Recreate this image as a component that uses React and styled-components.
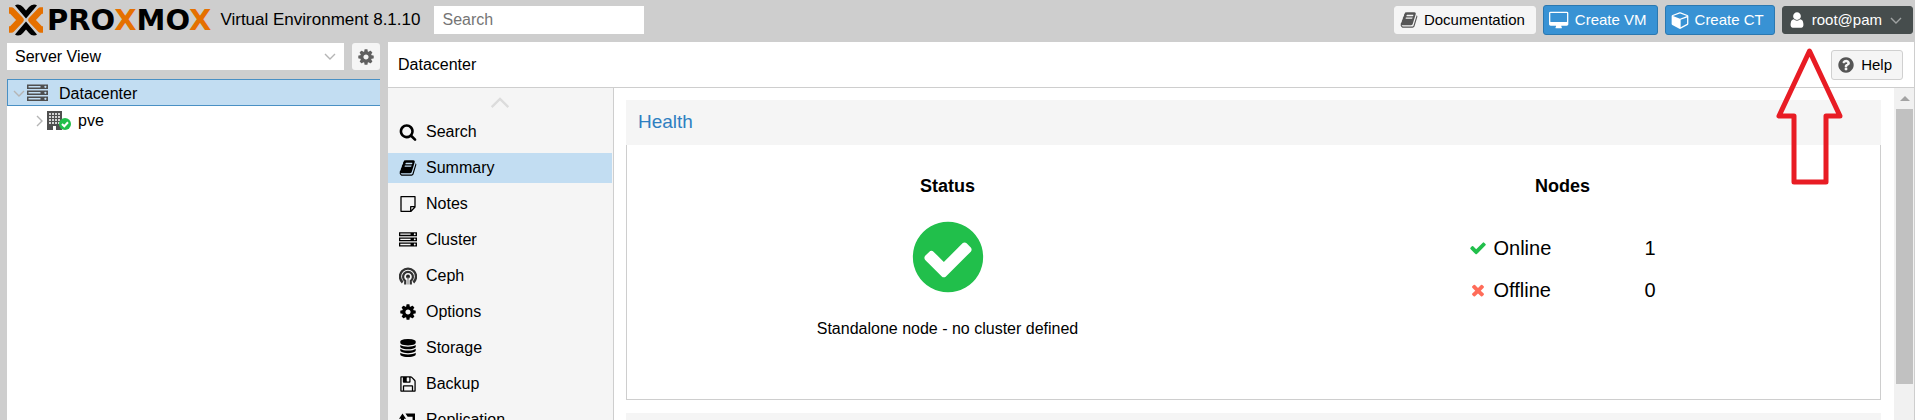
import React from "react";
import styled, { createGlobalStyle, css } from "styled-components";

const GlobalStyle = createGlobalStyle`
  * { box-sizing: border-box; }
  body {
    margin: 0;
    overflow: hidden;
    background: #cecece;
    color: #000;
    font: 16px/20px "Liberation Sans", Arial, sans-serif;
  }
  button, input, select { font: inherit; color: inherit; margin: 0; }
`;

/* ---------- icons ---------- */

const CIRCLE =
  "M1664 896q0 209-103 385.5t-279.5 279.5-385.5 103-385.5-103-279.5-279.5-103-385.5 103-385.5 279.5-279.5 385.5-103 385.5 103 279.500 279.500 103 385.500z";

const PATHS = {
  cog: "M1152 896q0-106-75-181t-181-75-181 75-75 181 75 181 181 75 181-75 75-181zm512-109v222q0 12-8 23t-20 13l-185 28q-19 54-39 91 35 50 107 138 10 12 10 25t-9 23q-27 37-99 108t-94 71q-12 0-26-9l-138-108q-44 23-91 38-16 136-29 186-7 28-36 28h-222q-14 0-24.5-8.5t-11.5-21.5l-28-184q-49-16-90-37l-141 107q-10 9-25 9-14 0-25-11-126-114-165-168-7-10-7-23 0-12 8-23 15-21 51-66.500t54-70.500q-27-50-41-99l-183-27q-13-2-21-12.500t-8-23.500v-222q0-12 8-23t19-13l186-28q14-46 39-92-40-57-107-138-10-12-10-24 0-10 9-23 26-36 98.500-107.500t94.500-71.500q13 0 26 10l138 107q44-23 91-38 16-136 29-186 7-28 36-28h222q14 0 24.500 8.500t11.500 21.500l28 184q49 16 90 37l142-107q9-9 24-9 13 0 25 10 129 119 165 170 7 8 7 22 0 12-8 23-15 21-51 66.500t-54 70.500q26 50 41 98l183 28q13 2 21 12.500t8 23.500z",
  checkCircle:
    "M1412 734q0-28-18-46l-91-90q-19-19-45-19t-45 19l-408 407-226-226q-19-19-45-19t-45 19l-91 90q-18 18-18 46 0 27 18 45l362 362q19 19 45 19 27 0 46-19l543-543q18-18 18-45z" + CIRCLE,
  check:
    "M1671 566q0 40-28 68l-724 724-136 136q-28 28-68 28t-68-28l-136-136-362-362q-28-28-28-68t28-68l136-136q28-28 68-28t68 28l294 295 656-657q28-28 68-28t68 28l136 136q28 28 28 68z",
  times:
    "M1490 1322q0 40-28 68l-136 136q-28 28-68 28t-68-28l-294-294-294 294q-28 28-68 28t-68-28l-136-136q-28-28-28-68t28-68l294-294-294-294q-28-28-28-68t28-68l136-136q28-28 68-28t68 28l294 294 294-294q28-28 68-28t68 28l136 136q28 28 28 68t-28 68l-294 294 294 294q28 28 28 68z",
  search:
    "M1216 832q0-185-131.500-316.500t-316.500-131.500-316.500 131.500-131.500 316.500 131.500 316.500 316.500 131.500 316.500-131.500 131.500-316.500zm512 832q0 52-38 90t-90 38q-54 0-90-38l-343-342q-179 124-399 124-143 0-273.500-55.500t-225-150-150-225-55.500-273.500 55.500-273.500 150-225 225-150 273.500-55.500 273.500 55.500 225 150 150 225 55.500 273.500q0 220-124 399l343 343q37 37 37 90z",
  help:
    "M1024 1376v-192q0-14-9-23t-23-9h-192q-14 0-23 9t-9 23v192q0 14 9 23t23 9h192q14 0 23-9t9-23zm256-672q0-88-55.500-163t-138.500-116-170-41q-243 0-371 213-15 24 8 42l132 100q7 6 19 6 16 0 25-12 53-68 86-92 34-24 86-24 48 0 85.500 26t37.500 59q0 38-20 61t-68 45q-63 28-115.500 86.500t-52.500 125.500v36q0 14 9 23t23 9h192q14 0 23-9t9-23q0-19 21.500-49.500t54.500-49.500q32-18 49-28.500t46-35 44.500-48 28-60.500 12.500-81z" + CIRCLE,
  book: "M1703 478q40 57 18 129l-275 906q-19 64-76.500 107.500t-122.500 43.500h-923q-77 0-148.500-53.500t-99.500-131.500q-24-67-2-127 0-4 3-27t4-37q1-8-3-21.500t-3-19.500q2-11 8-21t16.500-23.500 16.500-23.500q23-38 45-91.500t30-91.500q3-10 .5-30t-.5-28q3-11 17-28t17-23q21-36 42-92t25-90q1-9-2.500-32t.5-28q4-13 22-30.500t22-22.500q19-26 42.500-84.500t27.500-96.500q1-8-3-25.500t-2-26.500q2-8 9-18t18-23 17-21q8-12 16.500-30.500t15-35 16-36 19.500-32 26.500-23.500 36-11.500 47.500 5.500l-1 3q38-9 51-9h761q74 0 114 56t18 130l-274 906q-36 119-71.500 153.500t-128.500 34.500h-869q-27 0-38 15-11 16-1 43 24 70 144 70h923q29 0 56-15.500t35-41.500l300-987q7-22 5-57 38 15 59 43zm-1064 2q-4 13 2 22.500t20 9.500h608q13 0 25.500-9.500t16.500-22.500l21-64q4-13-2-22.500t-20-9.500h-608q-13 0-25.500 9.500t-16.500 22.500zm-83 256q-4 13 2 22.500t20 9.500h608q13 0 25.500-9.500t16.500-22.500l21-64q4-13-2-22.500t-20-9.500h-608q-13 0-25.500 9.500t-16.500 22.500z",
  user: "M1536 1399q0 109-62.500 187t-150.500 78h-854q-88 0-150.500-78t-62.500-187q0-85 8.500-160.500t31.500-152 58.500-131 94-89 134.500-34.500q131 128 313 128t313-128q76 0 134.500 34.500t94 89 58.500 131 31.500 152 8.500 160.500zm-256-887q0 159-112.500 271.500t-271.500 112.500-271.500-112.500-112.500-271.500 112.500-271.500 271.500-112.500 271.500 112.500 112.500 271.500z",
  desktop:
    "M1728 992v-832q0-13-9.500-22.500t-22.500-9.500h-1600q-13 0-22.500 9.500t-9.500 22.500v832q0 13 9.500 22.500t22.500 9.500h1600q13 0 22.500-9.500t9.500-22.500zm128-832v1088q0 66-47 113t-113 47h-544q0 37 16 77.500t32 71 16 43.500q0 26-19 45t-45 19h-512q-26 0-45-19t-19-45q0-14 16-44t32-70 16-78h-544q-66 0-113-47t-47-113v-1088q0-66 47-113t113-47h1600q66 0 113 47t47 113z",
  cube: "M896 1629l640-349v-636l-640 233v752zm-64-865l698-254-698-254-698 254zm832-252v768q0 35-18 65t-49 47l-704 384q-28 16-61 16t-61-16l-704-384q-31-17-49-47t-18-65v-768q0-40 23-73t61-47l704-256q22-8 44-8t44 8l704 256q38 14 61 47t23 73z",
  database:
    "M896 768q237 0 443-43t325-127v170q0 69-103 128t-280 93.500-385 34.500-385-34.500-280-93.500-103-128v-170q119 84 325 127t443 43zm0 768q237 0 443-43t325-127v170q0 69-103 128t-280 93.500-385 34.500-385-34.500-280-93.500-103-128v-170q119 84 325 127t443 43zm0-384q237 0 443-43t325-127v170q0 69-103 128t-280 93.500-385 34.500-385-34.500-280-93.500-103-128v-170q119 84 325 127t443 43zm0-1152q208 0 385 34.500t280 93.500 103 128v128q0 69-103 128t-280 93.500-385 34.500-385-34.500-280-93.500-103-128v-128q0-69 103-128t280-93.500 385-34.500z",
  floppy:
    "M512 1536h768v-384h-768v384zm896 0h128v-896q0-14-10-38.500t-20-34.500l-281-281q-10-10-34-20t-39-10v416q0 40-28 68t-68 28h-576q-40 0-68-28t-28-68v-416h-128v1280h128v-416q0-40 28-68t68-28h832q40 0 68 28t28 68v416zm-384-928v-320q0-13-9.500-22.500t-22.500-9.500h-192q-13 0-22.500 9.500t-9.500 22.500v320q0 13 9.500 22.500t22.500 9.500h192q13 0 22.500-9.500t9.500-22.500zm640 32v928q0 40-28 68t-68 28h-1344q-40 0-68-28t-28-68v-1344q0-40 28-68t68-28h928q40 0 88 20t76 48l280 280q28 28 48 76t20 88z",
  server:
    "M128 1408h1024v-128h-1024zM128 896h1024v-128h-1024zM128 384h1024v-128h-1024zM0 128h1792v384h-1792zM0 640h1792v384h-1792zM0 1152h1792v384h-1792zM1664 1344a96 96 0 1 0-192 0a96 96 0 1 0 192 0zM1664 832a96 96 0 1 0-192 0a96 96 0 1 0 192 0zM1664 320a96 96 0 1 0-192 0a96 96 0 1 0 192 0z",
  retweet:
    "M200 1536V768H0L350 256l350 512H500v460h560l250 308zM640 256H1592v768h200l-320 480-320-480h200V564H860z",
};

const Svg = styled.svg`
  display: block;
  flex: none;
  fill: currentColor;
`;

const Icon = ({ name, size = 18 }) => (
  <Svg
    width={name === "desktop" ? size + 2 : size}
    height={size}
    viewBox={name === "desktop" ? "-32 -64 1920 1792" : name === "cube" ? "-64 0 1792 1792" : "0 0 1792 1792"}
    fillRule="evenodd"
    aria-hidden="true"
  >
    <path d={PATHS[name]} />
  </Svg>
);

const Chevron = ({ dir = "down", width = 12, height = 7, color = "#b5b5b5" }) => {
  const d = { down: "M1 1L6 6L11 1", up: "M1 6L6 1L11 6", right: "M1 1L6 6L1 11" }[dir];
  return (
    <Svg width={width} height={height} viewBox={dir === "right" ? "0 0 7 12" : "0 0 12 7"} aria-hidden="true">
      <path d={d} fill="none" stroke={color} strokeWidth="1.4" />
    </Svg>
  );
};

const NoteIcon = () => (
  <Svg width="18" height="18" viewBox="0 0 18 18" aria-hidden="true">
    <path
      d="M2 1.700H16V12L12 16.300H2zM16 11.700H11.700V16.300"
      fill="none"
      stroke="#000"
      strokeWidth="1.300"
      strokeLinejoin="round"
    />
  </Svg>
);

const CephIcon = () => (
  <Svg width="18" height="18" viewBox="0 0 18 18" aria-hidden="true">
    <g fill="none" stroke="#333">
      <path d="M3.600 15.500A8 8 0 1 1 14.400 15.500" strokeWidth="2.400" />
      <path d="M6.200 17.500V13.800A4.900 4.900 0 1 1 11.800 13.800V17.500" strokeWidth="2.200" />
    </g>
    <circle cx="9" cy="9.500" r="2" fill="#222" />
    <path d="M8.500 10V17.500H9.500V10z" fill="#777" />
  </Svg>
);

const NodeIcon = () => (
  <Svg width="24" height="20" viewBox="0 0 24 20" aria-hidden="true">
    <path d="M0 0H15V19H0z" fill="#4f4f4f" />
    {[3, 6, 9, 12].map((y) => (
      <path key={y} d={`M2 ${y}H13`} stroke="#fff" strokeWidth="1.600" strokeDasharray="2 1" />
    ))}
    <path d="M6 19V15H9V19z" fill="#fff" />
    <circle cx="18" cy="13" r="6" fill="#21bf4b" />
    <path d="M15 13L17.300 15.200L21 11.200" fill="none" stroke="#fff" strokeWidth="2" />
  </Svg>
);

const LogoMark = () => (
  <Svg width="36" height="32" viewBox="0 0 36 32" aria-hidden="true">
    <g fill="none" strokeWidth="6.400">
      <path d="M1 6.500H3.500L12.500 16L3.500 25.500H1" stroke="#e57000" strokeLinejoin="round" />
      <path d="M35 6.500H32.500L23.500 16L32.500 25.500H35" stroke="#e57000" strokeLinejoin="round" />
    </g>
    <path d="M7 1.500Q8 0.500 10 0.500Q13 0.500 15 3L18 6.500L21 3Q23 0.500 26 0.500Q28 0.500 29 1.500L18 14.500z" fill="#000" />
    <path d="M7 30.500Q8 31.500 10 31.500Q13 31.500 15 29L18 25.500L21 29Q23 31.500 26 31.500Q28 31.500 29 30.500L18 17.500z" fill="#000" />
  </Svg>
);

/* ---------- layout ---------- */

const Page = styled.div`
  display: flex;
  flex-direction: column;
  height: 100vh;
`;

const Header = styled.header`
  display: flex;
  align-items: center;
  flex: none;
  height: 42px;
  padding: 0 2px 2px 8px;
`;

const Wordmark = styled.span`
  margin: 0 9px 0 3px;
  font: bold 29px/32px "DejaVu Sans", sans-serif;
  span { color: #e57000; }
`;

const Version = styled.span`
  margin-right: 14px;
  font-size: 17px;
  white-space: nowrap;
`;

const SearchInput = styled.input`
  width: 210px;
  height: 28px;
  padding: 0 8px;
  border: 0;
  border-radius: 0;
  background: #fff;
  &::placeholder { color: #757575; opacity: 1; }
`;

const Actions = styled.div`
  display: flex;
  align-items: center;
  gap: 7px;
  margin-left: auto;
`;

const variants = {
  plain: css`background: #f5f5f5; border-color: #f5f5f5; svg { color: #555; }`,
  outlined: css`background: #f5f5f5; border-color: #d0d0d0; svg { color: #555; }`,
  primary: css`background: #3892d4; border-color: #2b78b0; color: #fff;`,
  dark: css`background: #464d4d; border-color: #464d4d; color: #fff;`,
};

const Button = styled.button`
  display: flex;
  align-items: center;
  gap: 6px;
  height: ${(p) => (p.$variant === "plain" || p.$variant === "dark" ? 28 : 30)}px;
  padding: 0 10px 0 5px;
  border: 1px solid;
  border-radius: 3px;
  font-size: 15px;
  white-space: nowrap;
  ${(p) => variants[p.$variant]}
`;

const UserName = styled.span`
  margin-right: 2px;
`;

const UserMenu = styled.div`
  position: relative;
`;

const Pointer = styled.svg`
  position: absolute;
  z-index: 1;
  top: 40px;
  left: -8px;
  pointer-events: none;
`;

const Workspace = styled.div`
  display: flex;
  gap: 8px;
  flex: 1;
  min-height: 0;
  padding: 0 0 0 7px;
`;

const Sidebar = styled.aside`
  display: flex;
  flex-direction: column;
  flex: none;
  width: 373px;
`;

const ViewBar = styled.div`
  display: flex;
  gap: 8px;
  padding: 1px 0 9px;
`;

const SelectBox = styled.div`
  position: relative;
  flex: 1;
  select {
    width: 100%;
    height: 27px;
    padding: 0 8px;
    border: 0;
    border-radius: 0;
    background: #fff;
    appearance: none;
  }
  svg { position: absolute; right: 8px; top: 10px; }
`;

const GearButton = styled.button`
  display: flex;
  align-items: center;
  justify-content: center;
  width: 28px;
  height: 27px;
  padding: 0;
  border: 0;
  border-radius: 3px;
  background: #f5f5f5;
  color: #606060;
`;

const Tree = styled.div`
  flex: 1;
  background: #fff;
`;

const TreeRow = styled.div`
  display: flex;
  align-items: center;
  height: 27px;
  padding: 2px 0 0 ${(p) => (p.$level ? 28 : 5)}px;
  border: 1px solid ${(p) => (p.$selected ? "#4a90c4" : "transparent")};
  border-right: 0;
  background: ${(p) => (p.$selected ? "#c2ddf2" : "#fff")};
`;

const TreeIcon = styled.span`
  margin: 0 ${(p) => (p.$level ? 7 : 11)}px 0 ${(p) => (p.$level ? 4 : 2)}px;
  color: #4f4f4f;
`;

const Main = styled.main`
  display: flex;
  flex-direction: column;
  flex: 1;
  min-width: 0;
  background: #fff;
  border-right: 1px solid #cecece;
`;

const TitleBar = styled.div`
  display: flex;
  align-items: center;
  justify-content: space-between;
  flex: none;
  height: 46px;
  padding: 0 11px 0 10px;
  border-bottom: 1px solid #cecece;
`;

const Columns = styled.div`
  display: flex;
  flex: 1;
  min-height: 0;
`;

const Nav = styled.nav`
  display: flex;
  flex-direction: column;
  gap: 6px;
  flex: none;
  width: 226px;
  padding-right: 1px;
  overflow: hidden;
  border-right: 1px solid #cecece;
  background: #f5f5f5;
`;

const NavScroll = styled.div`
  display: flex;
  justify-content: center;
  flex: none;
  height: 23px;
  padding-top: 9px;
`;

const NavItem = styled.a`
  display: flex;
  align-items: center;
  gap: 9px;
  flex: none;
  height: 30px;
  padding-left: 11px;
  color: #000;
  text-decoration: none;
  background: ${(p) => (p.$active ? "#c2ddf2" : "transparent")};
`;

const Content = styled.div`
  display: flex;
  flex-direction: column;
  gap: 13px;
  flex: 1;
  min-width: 0;
  padding: 12px 13px 0 12px;
  overflow: hidden;
`;

const Panel = styled.section`
  flex: none;
`;

const PanelTitle = styled.h2`
  margin: 0;
  height: 45px;
  padding: 0 12px;
  background: #f5f5f5;
  color: #2f7fc1;
  font-size: 19px;
  font-weight: normal;
  line-height: 44px;
`;

const PanelBody = styled.div`
  display: flex;
  height: 255px;
  padding: 0 10px 0 13px;
  border: 1px solid #cecece;
  border-top: 0;
`;

const Card = styled.div`
  display: flex;
  flex-direction: column;
  align-items: center;
  flex: 1;
  padding-top: 29px;
`;

const CardTitle = styled.h3`
  margin: 0 0 18px;
  font-size: 18px;
  line-height: 24px;
`;

const StatusIcon = styled.div`
  color: #21bf4b;
`;

const StatusText = styled.p`
  margin: 21px 0 0;
`;

const NodeTable = styled.table`
  margin-top: 11px;
  border-collapse: collapse;
  font-size: 20px;
  th, td { height: 42px; padding: 0; font-weight: normal; text-align: left; }
  th { width: 176px; }
  td { width: 12px; }
`;

const NodeLabel = styled.span`
  display: flex;
  align-items: center;
  gap: 7px;
  svg { color: ${(p) => p.$color}; }
`;

const ScrollTrack = styled.div`
  flex: none;
  width: 20px;
  padding: 8px 1px 0 2px;
  background: #f1f1f1;
`;

const ScrollArrow = styled.div`
  width: 0;
  margin: 0 auto 8px;
  border: 5px solid transparent;
  border-top: 0;
  border-bottom-color: #a3a3a3;
`;

const ScrollThumb = styled.div`
  height: 85%;
  background: #c1c1c1;
`;

const NAV = [
  ["Search", <Icon name="search" />],
  ["Summary", <Icon name="book" />],
  ["Notes", <NoteIcon />],
  ["Cluster", <Icon name="server" />],
  ["Ceph", <CephIcon />],
  ["Options", <Icon name="cog" />],
  ["Storage", <Icon name="database" />],
  ["Backup", <Icon name="floppy" />],
  ["Replication", <Icon name="retweet" />],
];

export default function App() {
  return (
    <Page>
      <GlobalStyle />
      <Header>
        <LogoMark />
        <Wordmark>PRO<span>X</span>MO<span>X</span></Wordmark>
        <Version>Virtual Environment 8.1.10</Version>
        <SearchInput type="search" placeholder="Search" aria-label="Search" />
        <Actions>
          <Button $variant="plain"><Icon name="book" />Documentation</Button>
          <Button $variant="primary"><Icon name="desktop" />Create VM</Button>
          <Button $variant="primary"><Icon name="cube" />Create CT</Button>
          <UserMenu>
            <Button $variant="dark">
              <Icon name="user" /><UserName>root@pam</UserName><Chevron color="#a0a4a4" />
            </Button>
            <Pointer width="72" height="142" viewBox="0 0 72 142" aria-hidden="true">
              <path
                d="M35.500 5L5 70H20V136H52V70H66z"
                fill="none"
                stroke="#e81c24"
                strokeWidth="5"
                strokeLinejoin="round"
              />
            </Pointer>
          </UserMenu>
        </Actions>
      </Header>
      <Workspace>
        <Sidebar>
          <ViewBar>
            <SelectBox>
              <select aria-label="View"><option>Server View</option></select>
              <Chevron />
            </SelectBox>
            <GearButton aria-label="Settings"><Icon name="cog" /></GearButton>
          </ViewBar>
          <Tree>
            <TreeRow $selected>
              <Chevron />
              <TreeIcon><Icon name="server" size={21} /></TreeIcon>
              Datacenter
            </TreeRow>
            <TreeRow $level={1}>
              <Chevron dir="right" width={7} height={12} />
              <TreeIcon $level={1}><NodeIcon /></TreeIcon>
              pve
            </TreeRow>
          </Tree>
        </Sidebar>
        <Main>
          <TitleBar>
            <span>Datacenter</span>
            <Button $variant="outlined"><Icon name="help" />Help</Button>
          </TitleBar>
          <Columns>
            <Nav>
              <NavScroll><Chevron dir="up" width={20} height={12} color="#dcdcdc" /></NavScroll>
              {NAV.map(([label, icon]) => (
                <NavItem key={label} href="#" $active={label === "Summary"}>{icon}{label}</NavItem>
              ))}
            </Nav>
            <Content>
              <Panel>
                <PanelTitle>Health</PanelTitle>
                <PanelBody>
                  <Card>
                    <CardTitle>Status</CardTitle>
                    <StatusIcon><Icon name="checkCircle" size={82} /></StatusIcon>
                    <StatusText>Standalone node - no cluster defined</StatusText>
                  </Card>
                  <Card>
                    <CardTitle>Nodes</CardTitle>
                    <NodeTable>
                      <tbody>
                        <tr>
                          <th scope="row"><NodeLabel $color="#21bf4b"><Icon name="check" />Online</NodeLabel></th>
                          <td>1</td>
                        </tr>
                        <tr>
                          <th scope="row"><NodeLabel $color="#ff6c59"><Icon name="times" />Offline</NodeLabel></th>
                          <td>0</td>
                        </tr>
                      </tbody>
                    </NodeTable>
                  </Card>
                </PanelBody>
              </Panel>
              <Panel><PanelTitle as="div" /></Panel>
            </Content>
            <ScrollTrack>
              <ScrollArrow />
              <ScrollThumb />
            </ScrollTrack>
          </Columns>
        </Main>
      </Workspace>
    </Page>
  );
}
